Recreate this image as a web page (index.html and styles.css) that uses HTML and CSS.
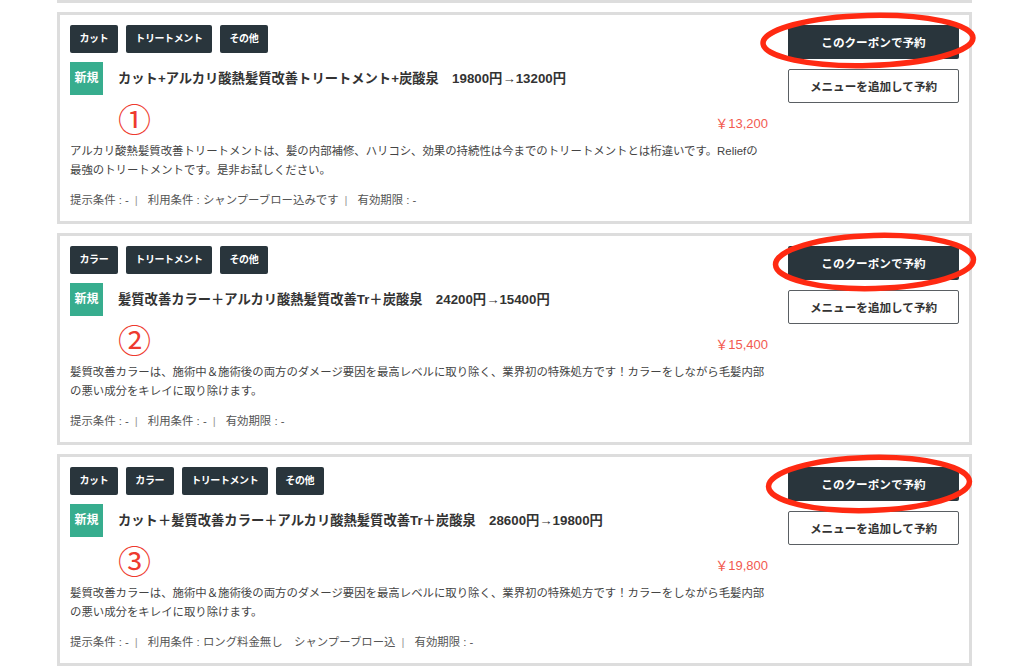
FILE: index.html
```html
<!DOCTYPE html>
<html lang="ja">
<head>
<meta charset="utf-8">
<title>クーポン</title>
<link rel="stylesheet" href="styles.css">
</head>
<body>
<div class="list">
  <div class="stub"></div>

  <article class="coupon">
    <div class="main">
      <ul class="tags"><li>カット</li><li>トリートメント</li><li>その他</li></ul>
      <div class="title-row"><span class="badge">新規</span><h2 class="title">カット+アルカリ酸熱髪質改善トリートメント+炭酸泉　19800円→13200円</h2></div>
      <div class="price-row"><span class="mark">①</span><span class="price">￥13,200</span></div>
      <p class="desc">アルカリ酸熱髪質改善トリートメントは、髪の内部補修、ハリコシ、効果の持続性は今までのトリートメントとは桁違いです。Reliefの最強のトリートメントです。是非お試しください。</p>
      <p class="cond"><span>提示条件 : -</span><span class="sep">|</span><span>利用条件 : シャンプーブロー込みです</span><span class="sep">|</span><span>有効期限 : -</span></p>
    </div>
    <div class="actions">
      <button class="btn btn-primary">このクーポンで予約</button>
      <button class="btn btn-outline">メニューを追加して予約</button>
    </div>
    <svg class="ring" width="224" height="64" viewBox="0 0 224 64"><ellipse cx="110" cy="29.5" rx="105" ry="25" transform="rotate(-1.5 110 29.5)"/></svg>
  </article>

  <article class="coupon">
    <div class="main">
      <ul class="tags"><li>カラー</li><li>トリートメント</li><li>その他</li></ul>
      <div class="title-row"><span class="badge">新規</span><h2 class="title">髪質改善カラー＋アルカリ酸熱髪質改善Tr＋炭酸泉　24200円→15400円</h2></div>
      <div class="price-row"><span class="mark">②</span><span class="price">￥15,400</span></div>
      <p class="desc">髪質改善カラーは、施術中＆施術後の両方のダメージ要因を最高レベルに取り除く、業界初の特殊処方です！カラーをしながら毛髪内部の悪い成分をキレイに取り除けます。</p>
      <p class="cond"><span>提示条件 : -</span><span class="sep">|</span><span>利用条件 : -</span><span class="sep">|</span><span>有効期限 : -</span></p>
    </div>
    <div class="actions">
      <button class="btn btn-primary">このクーポンで予約</button>
      <button class="btn btn-outline">メニューを追加して予約</button>
    </div>
    <svg class="ring" width="224" height="64" viewBox="0 0 224 64"><ellipse cx="116.5" cy="30" rx="99" ry="26.5" transform="rotate(-1.5 116.5 30)"/></svg>
  </article>

  <article class="coupon">
    <div class="main">
      <ul class="tags"><li>カット</li><li>カラー</li><li>トリートメント</li><li>その他</li></ul>
      <div class="title-row"><span class="badge">新規</span><h2 class="title">カット＋髪質改善カラー＋アルカリ酸熱髪質改善Tr＋炭酸泉　28600円→19800円</h2></div>
      <div class="price-row"><span class="mark">③</span><span class="price">￥19,800</span></div>
      <p class="desc">髪質改善カラーは、施術中＆施術後の両方のダメージ要因を最高レベルに取り除く、業界初の特殊処方です！カラーをしながら毛髪内部の悪い成分をキレイに取り除けます。</p>
      <p class="cond"><span>提示条件 : -</span><span class="sep">|</span><span>利用条件 : ロング料金無し　シャンプーブロー込</span><span class="sep">|</span><span>有効期限 : -</span></p>
    </div>
    <div class="actions">
      <button class="btn btn-primary">このクーポンで予約</button>
      <button class="btn btn-outline">メニューを追加して予約</button>
    </div>
    <svg class="ring" width="224" height="64" viewBox="0 0 224 64"><ellipse cx="111" cy="31" rx="100.5" ry="26.5" transform="rotate(-1.5 111 31)"/></svg>
  </article>
</div>
</body>
</html>
```

FILE: styles.css
```css
* { box-sizing: content-box; }

html, body {
  margin: 0;
  padding: 0;
  background: #ffffff;
}

body {
  font-family: "Liberation Sans", "Noto Sans CJK JP", sans-serif;
  color: #333333;
}

.list {
  width: 915px;
  margin-left: 57px;
}

.stub {
  height: 0;
  border: 3px solid #dddddd;
  border-top: none;
}

.coupon {
  position: relative;
  display: grid;
  grid-template-columns: 698px 171px;
  column-gap: 20px;
  align-items: start;
  width: 889px;
  padding: 10px 10px 11px;
  margin-top: 9px;
  border: 3px solid #dddddd;
  background: #ffffff;
}

.main {
  min-width: 0;
}

.tags {
  display: flex;
  gap: 8px;
  margin: 0;
  padding: 0;
  list-style: none;
}

.tags li {
  height: 28px;
  line-height: 28px;
  padding: 0 9.5px;
  background: #29353c;
  color: #ffffff;
  font-size: 10px;
  font-weight: bold;
  letter-spacing: -0.4px;
  border-radius: 2px;
}

.title-row {
  display: flex;
  align-items: center;
  gap: 15px;
  margin-top: 9px;
  height: 33px;
}

.badge {
  width: 33px;
  height: 33px;
  line-height: 33px;
  text-align: center;
  background: #37ad8e;
  color: #ffffff;
  font-size: 12px;
  font-weight: bold;
}

.title {
  margin: 0;
  font-size: 13.3px;
  font-weight: bold;
  color: #333333;
  line-height: 33px;
  white-space: nowrap;
}

.price-row {
  display: flex;
  justify-content: space-between;
  align-items: flex-end;
  height: 30px;
  margin-top: 8px;
}

.mark {
  margin-left: 48px;
  font-family: "Noto Sans CJK JP", sans-serif;
  font-size: 33px;
  line-height: 30px;
  color: #ee3a2e;
}

.price {
  font-size: 13px;
  line-height: 18px;
  color: #f25a4f;
}

.desc {
  margin: 9px 0 0;
  font-size: 11.4px;
  line-height: 19px;
  color: #444444;
}

.cond {
  margin: 10px 0 0;
  font-size: 11.4px;
  line-height: 20px;
  color: #555555;
}

.sep {
  margin: 0 10px 0 6px;
  color: #999999;
}

.actions {
  display: flex;
  flex-direction: column;
  gap: 10px;
}

.btn {
  display: block;
  width: 171px;
  height: 34px;
  margin: 0;
  padding: 0;
  font-family: "Liberation Sans", "Noto Sans CJK JP", sans-serif;
  font-size: 11.6px;
  font-weight: bold;
  border-radius: 2px;
  cursor: pointer;
}

.btn-primary {
  background: #29353c;
  color: #ffffff;
  border: none;
}

.btn-outline {
  box-sizing: border-box;
  background: #ffffff;
  color: #333333;
  border: 1px solid #5a5f63;
}

.ring {
  position: absolute;
  left: 698px;
  top: -4px;
  overflow: visible;
  pointer-events: none;
}

.ring ellipse {
  fill: none;
  stroke: #ff2a12;
  stroke-width: 5.5;
}
```
